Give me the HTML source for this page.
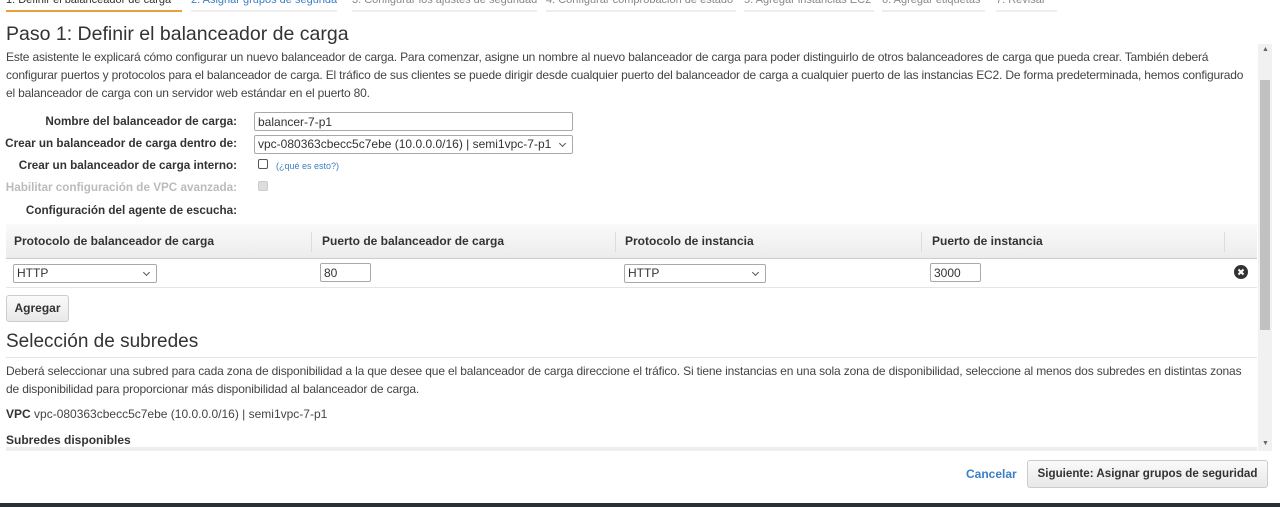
<!DOCTYPE html>
<html><head><meta charset="utf-8"><style>
*{box-sizing:border-box;margin:0;padding:0}
body{width:1280px;height:507px;overflow:hidden;background:#fff;font-family:"Liberation Sans",Arial,sans-serif;font-size:12px;color:#444;position:relative}
.a{position:absolute;white-space:nowrap}
.tab{position:absolute;top:-6px;font-size:11px;color:#888;height:18px;border-bottom:2px solid #eee;line-height:12px;white-space:nowrap;overflow:hidden}
.lbl{position:absolute;right:1043px;font-weight:bold;color:#333;font-size:11.7px;white-space:nowrap}
input.t,.sel{position:absolute;height:19px;border:1px solid #a9a9a9;font:12px "Liberation Sans",sans-serif;color:#333;padding:1px 3px;background:#fff;border-radius:2px;white-space:nowrap}
.sel::after{content:"";position:absolute;right:7px;top:5px;width:4px;height:4px;border-right:1px solid #555;border-bottom:1px solid #555;transform:rotate(45deg)}
.th{position:absolute;top:234px;font-weight:bold;color:#333;font-size:12px;white-space:nowrap}
.p{letter-spacing:-0.18px}
</style></head><body>
<div class="tab" style="left:6px;width:176px;color:#333;border-bottom-color:#e7a03c">1. Definir el balanceador de carga</div>
<div class="tab" style="left:191px;width:146px;color:#3b7fc4">2. Asignar grupos de seguridad</div>
<div class="tab" style="left:352px;width:185px">3. Configurar los ajustes de seguridad</div>
<div class="tab" style="left:546px;width:190px">4. Configurar comprobación de estado</div>
<div class="tab" style="left:744px;width:130px">5. Agregar instancias EC2</div>
<div class="tab" style="left:882px;width:103px">6. Agregar etiquetas</div>
<div class="tab" style="left:996px;width:61px">7. Revisar</div>

<div class="a" style="left:6px;top:23px;font-size:19.5px;color:#333">Paso 1: Definir el balanceador de carga</div>
<div class="a p" style="left:6px;top:48px;width:1246px;white-space:normal;line-height:18px;color:#444">Este asistente le explicará cómo configurar un nuevo balanceador de carga. Para comenzar, asigne un nombre al nuevo balanceador de carga para poder distinguirlo de otros balanceadores de carga que pueda crear. También deberá configurar puertos y protocolos para el balanceador de carga. El tráfico de sus clientes se puede dirigir desde cualquier puerto del balanceador de carga a cualquier puerto de las instancias EC2. De forma predeterminada, hemos configurado el balanceador de carga con un servidor web estándar en el puerto 80.</div>

<div class="lbl" style="top:115px">Nombre del balanceador de carga:</div>
<input class="t" style="left:254px;top:112px;width:319px" value="balancer-7-p1">
<div class="lbl" style="top:137px">Crear un balanceador de carga dentro de:</div>
<div class="sel" style="left:254px;top:135px;width:319px">vpc-080363cbecc5c7ebe (10.0.0.0/16) | semi1vpc-7-p1</div>
<div class="lbl" style="top:159px">Crear un balanceador de carga interno:</div>
<div class="a" style="left:258px;top:159px;width:10px;height:10px;border:1px solid #555;border-radius:2px"></div>
<div class="a" style="left:276px;top:161px;font-size:9px;color:#3b7fc4">(¿qué es esto?)</div>
<div class="lbl" style="top:181px;color:#bbb">Habilitar configuración de VPC avanzada:</div>
<div class="a" style="left:258px;top:181px;width:10px;height:10px;border:1px solid #ccc;background:#ddd;border-radius:2px"></div>
<div class="lbl" style="top:204px">Configuración del agente de escucha:</div>

<div class="a" style="left:6px;top:224px;width:1251px;height:35px;background:linear-gradient(#fafafa,#ececec);border-bottom:1px solid #ccc"></div>
<div class="a" style="left:311px;top:232px;width:1px;height:20px;background:#ddd"></div>
<div class="a" style="left:615px;top:232px;width:1px;height:20px;background:#ddd"></div>
<div class="a" style="left:921px;top:232px;width:1px;height:20px;background:#ddd"></div>
<div class="a" style="left:1224px;top:232px;width:1px;height:20px;background:#ddd"></div>
<div class="th" style="left:14px">Protocolo de balanceador de carga</div>
<div class="th" style="left:322px">Puerto de balanceador de carga</div>
<div class="th" style="left:625px">Protocolo de instancia</div>
<div class="th" style="left:932px">Puerto de instancia</div>
<div class="a" style="left:6px;top:287px;width:1251px;height:1px;background:#e5e5e5"></div>
<div class="sel" style="left:13px;top:264px;width:144px">HTTP</div>
<input class="t" style="left:320px;top:263px;width:51px" value="80">
<div class="sel" style="left:624px;top:264px;width:142px">HTTP</div>
<input class="t" style="left:930px;top:263px;width:51px" value="3000">
<svg class="a" style="left:1234px;top:265px" width="14" height="14" viewBox="0 0 14 14"><circle cx="7" cy="7" r="7" fill="#333"/><path d="M4.5 4.5l5 5M9.5 4.5l-5 5" stroke="#fff" stroke-width="2"/></svg>

<div class="a" style="left:6px;top:295px;width:63px;height:27px;border:1px solid #ccc;border-radius:3px;background:linear-gradient(#fafafa,#e8e8e8);font-weight:bold;color:#333;text-align:center;line-height:25px">Agregar</div>

<div class="a" style="left:6px;top:331px;font-size:19px;color:#333">Selección de subredes</div>
<div class="a" style="left:6px;top:357px;width:1251px;height:1px;background:#e5e5e5"></div>
<div class="a" style="left:6px;top:362px;width:1250px;white-space:normal;line-height:18px;letter-spacing:-0.15px">Deberá seleccionar una subred para cada zona de disponibilidad a la que desee que el balanceador de carga direccione el tráfico. Si tiene instancias en una sola zona de disponibilidad, seleccione al menos dos subredes en distintas zonas de disponibilidad para proporcionar más disponibilidad al balanceador de carga.</div>
<div class="a" style="left:6px;top:407px"><b style="color:#333">VPC</b> vpc-080363cbecc5c7ebe (10.0.0.0/16) | semi1vpc-7-p1</div>
<div class="a" style="left:6px;top:433px;font-weight:bold;color:#333">Subredes disponibles</div>
<div class="a" style="left:6px;top:447px;width:1251px;height:4px;background:#eee"></div>

<div class="a" style="left:1258px;top:44px;width:14px;height:407px;background:#f1f1f1"></div>
<div class="a" style="left:1260px;top:80px;width:10px;height:250px;background:#c1c1c1"></div>
<div class="a" style="left:1262px;top:46px;font-size:7px;color:#666">▲</div>
<div class="a" style="left:1262px;top:440px;font-size:7px;color:#666">▼</div>

<div class="a" style="left:966px;top:467px;font-weight:bold;color:#3b7fc4">Cancelar</div>
<div class="a" style="left:1027px;top:460px;width:241px;height:28px;border:1px solid #ccc;border-radius:3px;background:linear-gradient(#fafafa,#e8e8e8);font-weight:bold;color:#333;text-align:center;line-height:26px;font-size:11.6px">Siguiente: Asignar grupos de seguridad</div>
<div class="a" style="left:0;top:503px;width:1280px;height:4px;background:#2a3038"></div>
</body></html>
